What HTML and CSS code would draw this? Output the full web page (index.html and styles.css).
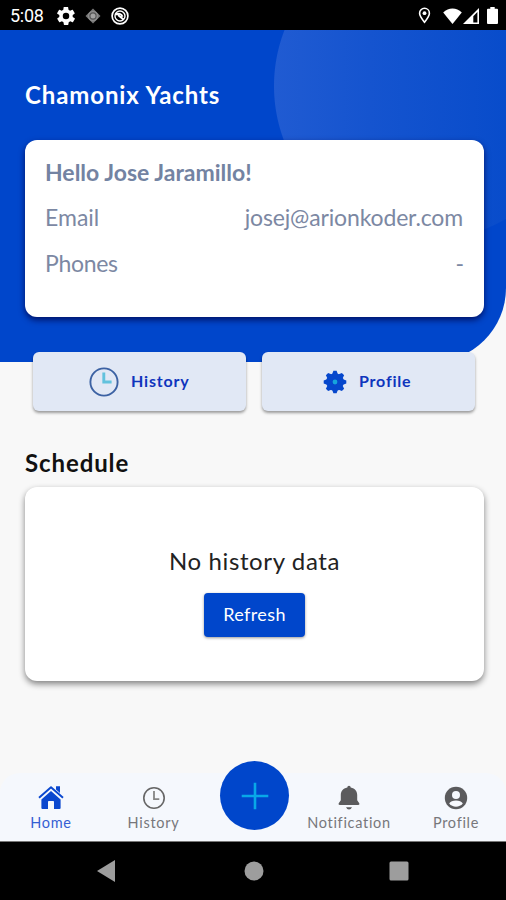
FILE: index.html
```html
<!DOCTYPE html>
<html lang="en">
<head>
<meta charset="utf-8">
<title>Chamonix Yachts</title>
<link rel="stylesheet" href="styles.css">
</head>
<body>
<div class="screen">
  <header class="status">
    <span class="time">5:08</span>
    <svg class="s-gear" width="18" height="18" viewBox="2 2 20 20"><path fill="#fff" d="M19.4 13a7.500 7.500 0 0 0 0-2l2.100-1.600c.2-.2.3-.4.1-.7l-2-3.400c-.1-.2-.4-.3-.6-.2l-2.500 1a7.300 7.300 0 0 0-1.700-1l-.4-2.600c0-.3-.2-.5-.5-.5h-4c-.2 0-.4.200-.5.400l-.4 2.700c-.6.200-1.200.6-1.700 1l-2.500-1c-.2-.1-.5 0-.6.200l-2 3.400c-.1.200-.1.500.1.700L4.600 11a7.500 7.500 0 0 0 0 2l-2.100 1.600c-.2.200-.3.400-.1.700l2 3.400c.1.200.4.300.6.200l2.500-1c.5.400 1.100.7 1.700 1l.4 2.600c.1.300.3.500.5.500h4c.3 0 .5-.2.500-.5l.4-2.600c.6-.3 1.200-.6 1.700-1l2.500 1c.2.100.5 0 .6-.2l2-3.400c.1-.2.1-.5-.1-.7zM12 15.600a3.600 3.600 0 1 1 0-7.200 3.600 3.600 0 0 1 0 7.200z"/></svg>
    <svg class="s-target" width="16" height="16" viewBox="0 0 16 16"><path fill="#777" d="M8 .5 15.500 8 8 15.500.5 8z"/><circle cx="8" cy="8" r="4.400" fill="#555" stroke="#8c8c8c" stroke-width="1.500"/><circle cx="8" cy="8" r="2.500" fill="#a3a3a3"/></svg>
    <svg class="s-ring" width="18" height="18" viewBox="0 0 18 18"><g fill="none" stroke="#fff"><circle cx="9" cy="9" r="7.900" stroke-width="1.700"/><circle cx="9" cy="9" r="5" stroke-width="1.400"/><path stroke-width="2" d="M4.500 7.500c3-1.500 6-.8 7 2.200M7 8l5.500 4.500"/></g></svg>
    <span class="grow"></span>
    <svg class="s-pin" width="13" height="17" viewBox="0 0 13 17"><path fill="none" stroke="#fff" stroke-width="1.600" d="M6.500 15.300C4 12 1.600 9 1.600 6.200a4.900 4.900 0 0 1 9.800 0c0 2.800-2.400 5.800-4.900 9.100z"/><circle cx="6.500" cy="6.200" r="1.900" fill="#fff"/></svg>
    <svg class="s-wifi" width="19" height="16" viewBox="0 0 19 16"><path fill="#fff" d="M9.500 16 .2 4.400C5.500-.8 13.500-.8 18.800 4.400z"/></svg>
    <svg class="s-cell" width="16" height="16" viewBox="0 0 16 16"><path fill="#fff" fill-rule="evenodd" d="M16 0v16H0zM14.400 4 10.300 8.300v6.100h4.100z"/></svg>
    <svg class="s-batt" width="11" height="17" viewBox="0 0 11 17"><path fill="#fff" d="M3.300 0h4.400v1.700H10q1 0 1 1V16q0 1-1 1H1q-1 0-1-1V2.700q0-1 1-1h2.300z"/></svg>
  </header>

  <section class="hero">
    <h1 class="brand">Chamonix Yachts</h1>
    <div class="card user">
      <div class="row hello"><span>Hello Jose Jaramillo!</span></div>
      <div class="row"><span>Email</span><span class="v-email">josej@arionkoder.com</span></div>
      <div class="row"><span class="k-phones">Phones</span><span>-</span></div>
    </div>
  </section>

  <div class="actions">
    <div class="action">
      <svg class="a-clock" width="30" height="30" viewBox="0 0 30 30"><circle cx="15" cy="15" r="13.600" fill="none" stroke="#3c62a3" stroke-width="1.900"/><path d="M14.800 5.500v9.500h7.800" fill="none" stroke="#62c2dd" stroke-width="2.900"/></svg>
      <span>History</span>
    </div>
    <div class="action">
      <svg class="a-cog" width="24" height="24" viewBox="-12 -12 24 24"><g fill="#0647cc"><circle r="8.800"/><path id="teeth" d="M-2.800-8-1.600-11.300H1.600L2.800-8V8L1.600 11.300H-1.600L-2.800 8z"/><use href="#teeth" transform="rotate(45)"/><use href="#teeth" transform="rotate(90)"/><use href="#teeth" transform="rotate(135)"/></g><circle r="2.400" fill="#16a5dc"/></svg>
      <span>Profile</span>
    </div>
  </div>

  <main class="schedule">
    <h2 class="title">Schedule</h2>
    <div class="card empty">
      <p class="msg">No history data</p>
      <button class="refresh">Refresh</button>
    </div>
  </main>

  <nav class="tabs">
    <div class="tab home">
      <svg width="26" height="26" viewBox="0 0 26 26"><path fill="#0b48cf" d="M3.400 14.400 13 6l9.600 8.400v8.500q0 1.100-1.100 1.100H16v-7.300q0-.8-.8-.8h-4.400q-.8 0-.8.800V24H4.500q-1.100 0-1.100-1.100zM18 1.200h4v6.800L18 4.500z"/><path fill="none" stroke="#f5f8fd" stroke-width=".9" d="M1.600 14.700 13 4.700l11.400 10"/><path fill="none" stroke="#0b48cf" stroke-width="1.900" stroke-linejoin="round" d="M1 12.800 13 2.200l12 10.600"/></svg>
      <span>Home</span>
    </div>
    <div class="tab hist">
      <svg width="26" height="26" viewBox="0 0 26 26"><circle cx="13" cy="13" r="10.200" fill="none" stroke="#666" stroke-width="1.600"/><path fill="none" stroke="#858585" stroke-width="1.800" d="M13 6v8.200h5.300"/></svg>
      <span>History</span>
    </div>
    <div class="fab"><svg width="28" height="28" viewBox="0 0 28 28"><path d="M14 .7v26.600M.7 14h26.600" stroke="#08a8e8" stroke-width="2.600" fill="none"/></svg></div>
    <div class="tab notif">
      <svg width="26" height="26" viewBox="0 0 26 26"><path transform="translate(0 -1)" fill="#5b5b5d" d="M11.300 3.500a1.700 1.700 0 0 1 3.400 0c4.400.9 6.500 3.800 6.500 7.500v5.200l1.900 2.900c.8 1.200.1 2-.9 2H3.800c-1 0-1.700-.8-.9-2l1.900-2.900V11c0-3.700 2.100-6.600 6.500-7.500zM10 23.200h6q-1 2.200-3 2.200t-3-2.200z"/></svg>
      <span>Notification</span>
    </div>
    <div class="tab prof">
      <svg width="26" height="26" viewBox="0 0 26 26"><circle cx="13" cy="13" r="11.200" fill="#5b5b5d"/><circle cx="13" cy="10" r="4" fill="#f6f8fd"/><path fill="#f6f8fd" d="M6.200 18.600c1.800-4.300 11.800-4.300 13.600 0-3.200 4.200-10.400 4.200-13.600 0z"/></svg>
      <span>Profile</span>
    </div>
  </nav>

  <footer class="system">
    <svg width="18" height="22" viewBox="0 0 18 22"><path fill="#9d9d9d" d="M18 0v22L0 11z"/></svg>
    <svg width="20" height="20" viewBox="0 0 20 20"><circle cx="10" cy="10" r="9.500" fill="#9d9d9d"/></svg>
    <svg width="20" height="20" viewBox="0 0 20 20"><rect x=".5" y=".5" width="19" height="19" rx="1.500" fill="#9d9d9d"/></svg>
  </footer>
</div>
</body>
</html>
```
FILE: styles.css
```css
* { box-sizing: border-box; }
body { margin: 0; font-family: Lato, "Liberation Sans", sans-serif; background: #f8f8f8; }
h1, h2, p { margin: 0; }
svg { display: block; flex: none; }
span, h1, h2, p { white-space: nowrap; }
.screen { width: 506px; height: 900px; overflow: hidden; display: flex; flex-direction: column; background: #f8f8f8; }

.status { height: 30px; flex: none; background: #000; color: #fff; display: flex; align-items: center; padding: 1px 8px 0 10px; }
.time { font: 18px/20px Roboto, sans-serif; width: 47px; letter-spacing: -.3px; padding-top: 1px; }
.s-target { margin-left: 10px; }
.s-ring { margin-left: 10px; }
.grow { flex: 1; }
.s-pin { margin-right: 1px; }
.s-wifi { margin-left: 11px; }
.s-cell { margin-left: 1px; }
.s-batt { margin-left: 8px; }

.hero { height: 332px; flex: none; padding: 50px 22px 0 25px; border-bottom-right-radius: 74px;
  background: radial-gradient(circle at 428px 56px, transparent 153.500px, #0046cb 154.500px),
    linear-gradient(90deg, #0046cb 270px, #205bd2 274px, #1554cf 370px, #084ccb 506px); }
.brand { color: #fff; font-size: 24px; line-height: 30px; font-weight: 700; letter-spacing: .88px; }
.card { background: #fff; border-radius: 12px; }
.user { height: 177px; margin-top: 30px; padding: 9px 20px; color: #7c88a3; box-shadow: 0 3px 6px rgba(0,0,70,.75); }
.row { height: 45.600px; display: flex; align-items: center; justify-content: space-between; font-size: 23px; }
.hello { font-weight: 700; color: #7383a2; }
.v-email { letter-spacing: -.15px; margin-right: 1px; }
.k-phones { letter-spacing: -.3px; }

.actions { flex: none; margin: -10px 31px 0 33px; height: 59px; display: flex; gap: 16px; }
.action { flex: 1; border-radius: 6px; background: #e1e8f5; box-shadow: 0 2px 3px rgba(0,0,0,.38); color: #0f35bd; font-size: 16px; font-weight: 700; display: flex; align-items: center; }
.a-clock { margin-left: 56px; }
.a-cog { margin-left: 61px; }
.action span { margin-left: 12px; letter-spacing: .8px; padding-bottom: 2px; }

.schedule { padding: 37px 22px 0 25px; flex: none; }
.title { color: #111; font-size: 24px; line-height: 30px; font-weight: 700; letter-spacing: .9px; }
.empty { margin-top: 9px; height: 194px; padding-top: 59px; display: flex; flex-direction: column; align-items: center; box-shadow: 0 3px 6px rgba(0,0,0,.48); }
.msg { font-size: 24px; line-height: 30px; color: #222; letter-spacing: .62px; }
.refresh { margin-top: 17px; width: 101px; height: 44px; padding: 0 0 2px; border: 0; border-radius: 4px; background: #0046cb; color: #fff; font: 18px Lato, sans-serif; letter-spacing: .4px; box-shadow: 0 1px 3px rgba(0,0,0,.4); }

.tabs { margin-top: 92px; height: 68px; flex: none; border-radius: 20px 20px 0 0; background: #f5f8fd; display: grid; grid-template-columns: 102px 102px 100px 90px 112px; }
.tab { display: flex; flex-direction: column; align-items: center; padding-top: 12px; color: #77777b; font-size: 14.500px; line-height: 20px; }
.tab span { margin-top: 2px; letter-spacing: .7px; }
.home { color: #3560d3; }
.hist { padding-left: 1px; }
.prof { padding-left: 12px; }
.fab { width: 69px; height: 69px; border-radius: 50%; background: #0046cb; margin: -12px 0 0 16px; display: flex; align-items: center; justify-content: center; }

.system { height: 59px; flex: none; background: #000; display: grid; grid-template-columns: 18px 20px 20px; column-gap: 127px; padding-left: 97px; align-items: center; border-top: 1px solid #777; }
.system svg:nth-child(2) { margin-left: 1.500px; }
```
